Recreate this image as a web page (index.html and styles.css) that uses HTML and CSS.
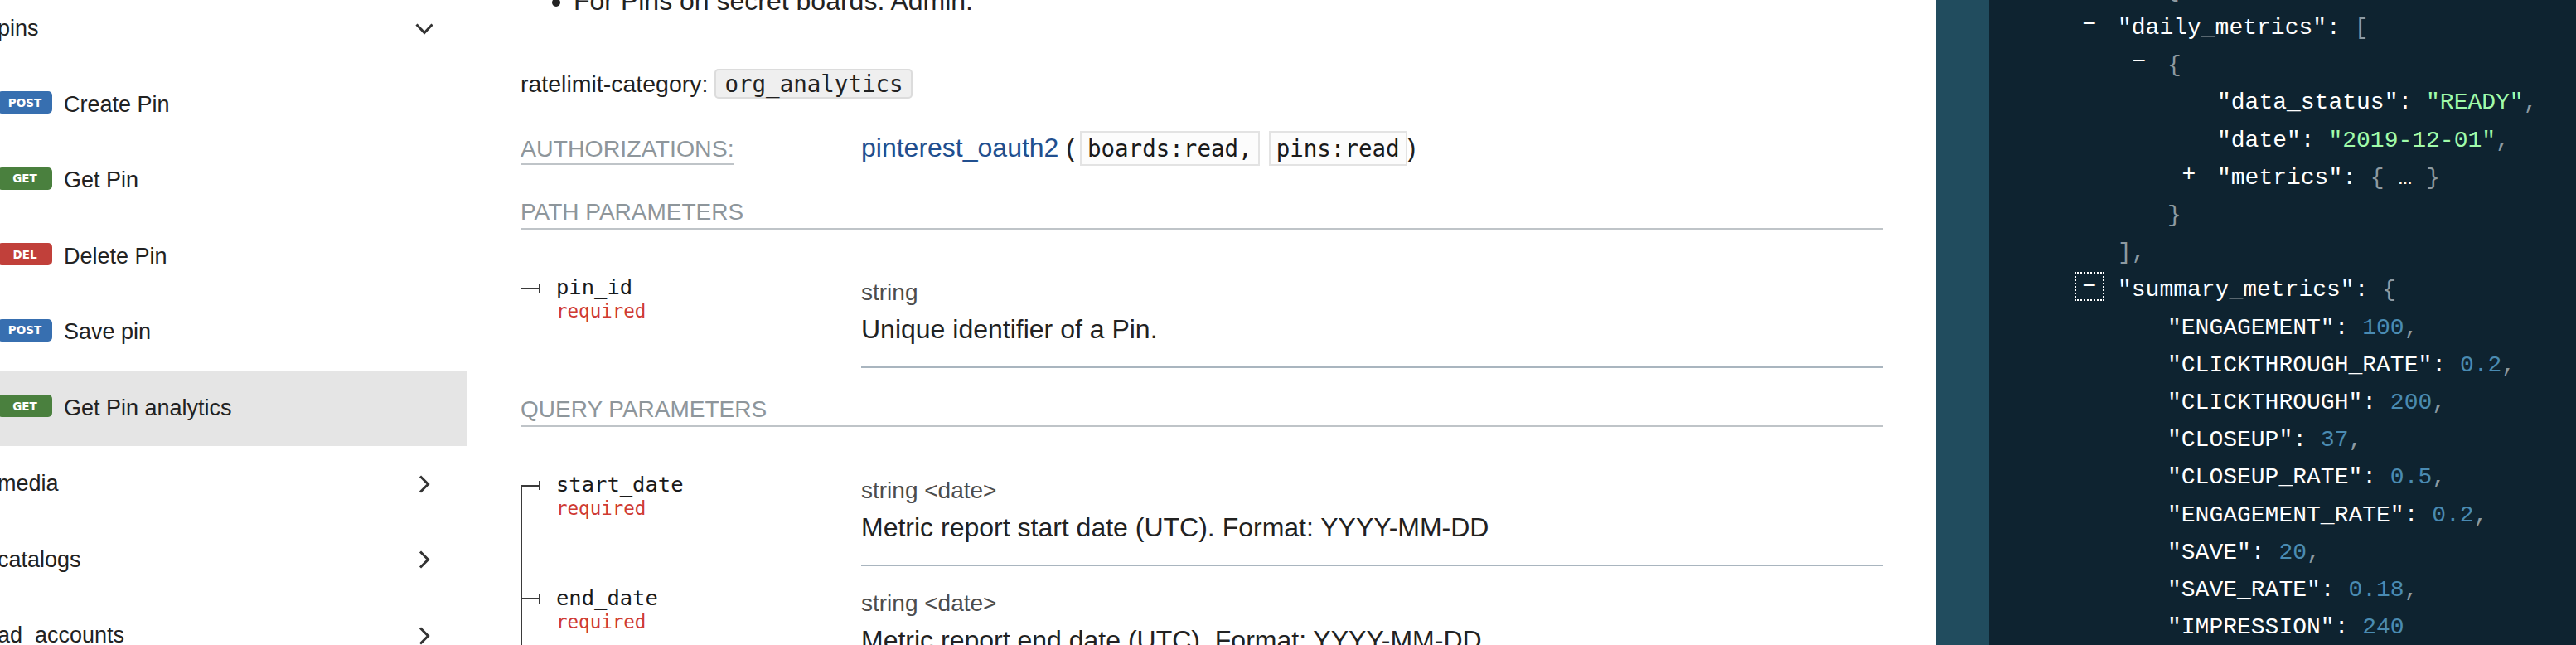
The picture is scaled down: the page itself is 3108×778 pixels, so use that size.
FILE: index.html
```html
<!DOCTYPE html>
<html lang="en">
<head>
<meta charset="utf-8">
<title>Get Pin analytics</title>
<link rel="stylesheet" href="styles.css">
</head>
<body>
<nav class="sidebar">
  <ul class="menu">
    <li class="menu-item tag"><span class="label">pins</span><span class="chev"><svg width="22" height="14" viewBox="0 0 22 14"><polyline points="1.5,1.5 11,11.5 20.5,1.5" fill="none" stroke="#333" stroke-width="3"/></svg></span></li>
    <li class="menu-item op"><span class="badge post">post</span><span class="label">Create Pin</span></li>
    <li class="menu-item op"><span class="badge get">get</span><span class="label">Get Pin</span></li>
    <li class="menu-item op"><span class="badge del">del</span><span class="label">Delete Pin</span></li>
    <li class="menu-item op"><span class="badge post">post</span><span class="label">Save pin</span></li>
    <li class="menu-item op active"><span class="badge get">get</span><span class="label">Get Pin analytics</span></li>
    <li class="menu-item tag"><span class="label">media</span><span class="chev"><svg width="14" height="22" viewBox="0 0 14 22"><polyline points="2,1.5 11.5,11 2,20.5" fill="none" stroke="#333" stroke-width="3"/></svg></span></li>
    <li class="menu-item tag"><span class="label">catalogs</span><span class="chev"><svg width="14" height="22" viewBox="0 0 14 22"><polyline points="2,1.5 11.5,11 2,20.5" fill="none" stroke="#333" stroke-width="3"/></svg></span></li>
    <li class="menu-item tag"><span class="label">ad_accounts</span><span class="chev"><svg width="14" height="22" viewBox="0 0 14 22"><polyline points="2,1.5 11.5,11 2,20.5" fill="none" stroke="#333" stroke-width="3"/></svg></span></li>
  </ul>
</nav>

<main class="content">
  <ul class="bullets"><li>For Pins on secret boards: Admin.</li></ul>
  <p class="ratelimit">ratelimit-category: <code class="code-tag">org_analytics</code></p>
  <div class="auth">
    <div class="auth-label"><span>AUTHORIZATIONS:</span></div>
    <div class="auth-value"><a class="link" href="#">pinterest_oauth2</a> (<code class="scope">boards:read,</code><code class="scope second">pins:read</code>)</div>
  </div>

  <h5 class="section">PATH PARAMETERS</h5>
  <div class="params">
    <div class="param only">
      <div class="pname"><span class="name">pin_id</span><span class="req">required</span></div>
      <div class="pdesc"><div class="ptype">string</div><div class="ptext">Unique identifier of a Pin.</div></div>
    </div>
  </div>

  <h5 class="section query">QUERY PARAMETERS</h5>
  <div class="params">
    <div class="param first">
      <div class="pname"><span class="name">start_date</span><span class="req">required</span></div>
      <div class="pdesc"><div class="ptype">string &lt;date&gt;</div><div class="ptext">Metric report start date (UTC). Format: YYYY-MM-DD</div></div>
    </div>
    <div class="param mid">
      <div class="pname"><span class="name">end_date</span><span class="req">required</span></div>
      <div class="pdesc"><div class="ptype">string &lt;date&gt;</div><div class="ptext">Metric report end date (UTC). Format: YYYY-MM-DD</div></div>
    </div>
  </div>
</main>

<aside class="panel">
  <div class="strip"></div>
  <div class="json">
    <ul class="root">
      <li><button class="tog">−</button><span class="k">"all"</span>: <span class="p">{</span>
        <ul>
          <li><button class="tog">−</button><span class="k">"daily_metrics"</span>: <span class="p">[</span>
            <ul>
              <li><button class="tog">−</button><span class="p">{</span>
                <ul>
                  <li><span class="k">"data_status"</span>: <span class="s">"READY"</span><span class="p">,</span></li>
                  <li><span class="k">"date"</span>: <span class="s">"2019-12-01"</span><span class="p">,</span></li>
                  <li><button class="tog">+</button><span class="k">"metrics"</span>: <span class="p">{</span> … <span class="p">}</span></li>
                </ul>
                <div class="p">}</div>
              </li>
            </ul>
            <div class="p">],</div>
          </li>
          <li><button class="tog focus">−</button><span class="k">"summary_metrics"</span>: <span class="p">{</span>
            <ul>
              <li><span class="k">"ENGAGEMENT"</span>: <span class="n">100</span><span class="p">,</span></li>
              <li><span class="k">"CLICKTHROUGH_RATE"</span>: <span class="n">0.2</span><span class="p">,</span></li>
              <li><span class="k">"CLICKTHROUGH"</span>: <span class="n">200</span><span class="p">,</span></li>
              <li><span class="k">"CLOSEUP"</span>: <span class="n">37</span><span class="p">,</span></li>
              <li><span class="k">"CLOSEUP_RATE"</span>: <span class="n">0.5</span><span class="p">,</span></li>
              <li><span class="k">"ENGAGEMENT_RATE"</span>: <span class="n">0.2</span><span class="p">,</span></li>
              <li><span class="k">"SAVE"</span>: <span class="n">20</span><span class="p">,</span></li>
              <li><span class="k">"SAVE_RATE"</span>: <span class="n">0.18</span><span class="p">,</span></li>
              <li><span class="k">"IMPRESSION"</span>: <span class="n">240</span></li>
            </ul>
            <div class="p">}</div>
          </li>
        </ul>
      </li>
    </ul>
  </div>
</aside>
</body>
</html>
```

FILE: styles.css
```css
* { box-sizing: border-box; }
html, body { margin: 0; padding: 0; }
body {
  width: 3108px;
  height: 778px;
  overflow: hidden;
  display: flex;
  align-items: flex-start;
  font-family: "Liberation Sans", Arial, sans-serif;
  color: #222;
  background: #fff;
}

/* ---------- sidebar ---------- */
.sidebar {
  width: 564px;
  flex: none;
  height: 778px;
  overflow: hidden;
  background: #fff;
}
.menu {
  list-style: none;
  margin: -11px 0 0 -3px;
  padding: 0;
}
.menu-item {
  height: 91.5px;
  display: flex;
  align-items: center;
  padding-right: 40px;
  font-size: 27px;
  color: #222;
}
.menu-item.active { background: #e5e5e5; }
.menu-item .label { flex: 1; white-space: nowrap; }
.chev {
  width: 24px;
  display: flex;
  justify-content: center;
  align-items: center;
}
.chev svg { display: block; }
.badge {
  flex: none;
  width: 66px;
  height: 27px;
  margin: 0 14px 5px 0;
  border-radius: 5px;
  display: flex;
  align-items: center;
  justify-content: center;
  font: bold 13.5px "DejaVu Sans", Verdana, sans-serif;
  color: #fff;
  text-transform: uppercase;
}
.badge.post { background: #376fb0; }
.badge.get { background: #4a803e; }
.badge.del { background: #c1403a; }

/* ---------- main content ---------- */
.content {
  width: 1772px;
  flex: none;
  padding: 0 64px;
  font-size: 32px;
  color: #222;
}
.bullets {
  margin: -22px 0 0;
  padding-left: 64px;
  line-height: 46px;
}
.ratelimit {
  margin: 57px 0 0;
  font-size: 28.5px;
  line-height: 40px;
  color: #1f1f1f;
}
.code-tag {
  font-family: "DejaVu Sans Mono", monospace;
  font-size: 27.5px;
  padding: 0 9px 0 10px;
  background: #efefef;
  border: 2px solid #dcdcdc;
  border-radius: 5px;
  color: #222;
}
.auth {
  display: flex;
  align-items: baseline;
  margin-top: 34px;
}
.auth-label { width: 411px; flex: none; }
.auth-label span {
  display: inline-block;
  font-size: 28.5px;
  line-height: 34px;
  color: #8e969b;
  border-bottom: 2px solid #bfc4c8;
  padding-bottom: 1px;
}
.auth-value { font-size: 32px; line-height: 46px; color: #222; }
.link { color: #214f8f; text-decoration: none; }
.scope {
  font-family: "DejaVu Sans Mono", monospace;
  font-size: 27.5px;
  padding: 3px 7px;
  margin-left: 6px;
  background: #fcfcfc;
  border: 2px solid #e3e3e3;
  color: #1a1a1a;
}
.scope.second { margin-left: 11px; }

.section {
  margin: 37px 0 0;
  font-size: 28px;
  line-height: 34px;
  font-weight: normal;
  color: #8e969b;
  border-bottom: 2px solid #bfc4c8;
  padding-bottom: 2px;
}
.section.query { margin-top: 33px; }
.params { margin-top: 31px; }
.param {
  display: grid;
  grid-template-columns: 411px 1fr;
}
.pname {
  position: relative;
  padding: 23px 0 0 43px;
}
.pname .name {
  display: block;
  font: 25.5px/30px "DejaVu Sans Mono", monospace;
  color: #1a1a1a;
}
.pname .req {
  display: block;
  font: 22.5px/29px "DejaVu Sans Mono", monospace;
  color: #cf3a32;
}
/* tree connector: horizontal stub with end tick */
.pname::before {
  content: "";
  position: absolute;
  left: 0;
  top: 34px;
  width: 22px;
  height: 11px;
  border-right: 2px solid #3a3a3a;
  background: linear-gradient(#3a3a3a, #3a3a3a) no-repeat 0 50% / 100% 2px;
}
/* tree connector: vertical spine */
.pname::after {
  content: "";
  position: absolute;
  left: 0;
  width: 2px;
  background: #3a3a3a;
}
.param.first .pname::after { top: 39px; bottom: 0; }
.param.mid .pname::after { top: 0; bottom: 0; }
.param.last .pname::after { top: 0; height: 41px; }
.param.only .pname::after { display: none; }

.pdesc {
  padding: 25.3px 0 22px;
  border-bottom: 2px solid #a9b5bf;
}
.ptype { font-size: 28px; line-height: 40px; color: #4d4d4d; }
.ptext { font-size: 32px; line-height: 46px; margin-top: 1px; color: #222; }

/* ---------- right panel ---------- */
.panel {
  flex: 1;
  height: 778px;
  display: flex;
  background: #0e2330;
  overflow: hidden;
}
.strip { width: 64px; flex: none; background: #214c5e; }
.json {
  flex: 1;
  padding-left: 95px;
  margin-top: -34.3px;
  font: 28px/45.2px "Liberation Mono", "Courier New", monospace;
  color: #fff;
  white-space: nowrap;
}
.json ul { list-style: none; margin: 0; padding: 0 0 0 60px; }
.json ul.root { padding-left: 0; }
.tog {
  display: inline-block;
  vertical-align: top;
  width: 34px;
  height: 33px;
  margin: 2px 17px 0 -51px;
  padding: 0;
  border: 0;
  background: none;
  color: #fff;
  font: 28px/33px "Liberation Mono", "Courier New", monospace;
  text-align: center;
}
.tog.focus { outline: 2px dotted #fff; outline-offset: -1px; }
.k { color: #fff; }
.s { color: #a0fbaa; }
.n { color: #4a8bb2; }
.p { color: #8d9aa1; }
```
